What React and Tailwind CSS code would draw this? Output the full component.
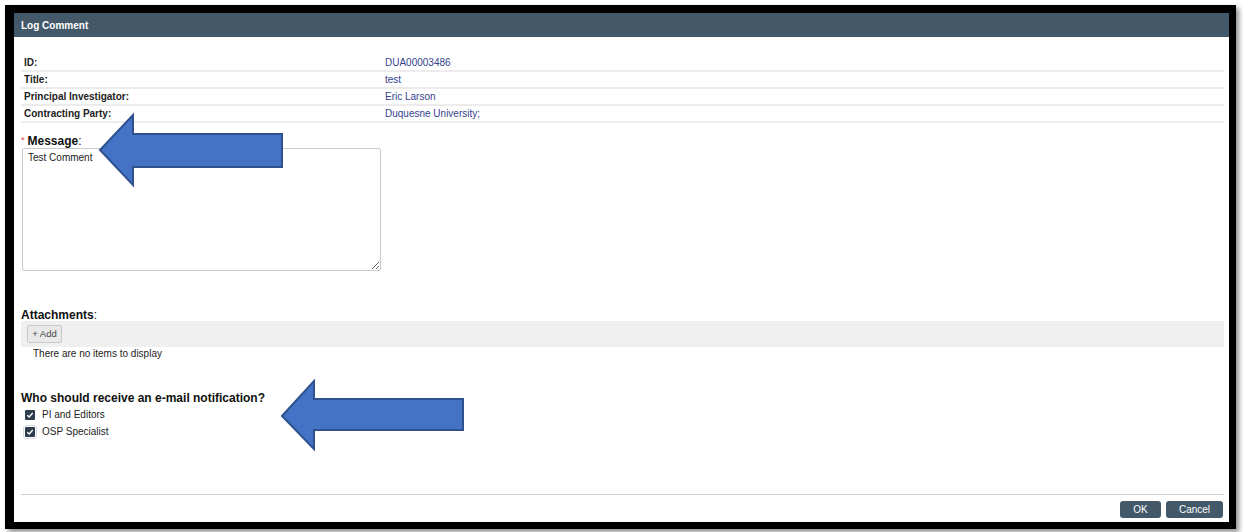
import React from "react";

const font = { fontFamily: '"Liberation Sans", Arial, sans-serif' };

function Row({ label, value }) {
  return (
    <div className="flex h-[17px] items-center border-b-2 border-[#ececec] pl-[3px]">
      <div className="w-[361px] text-[10px] font-bold leading-[15px] text-[#222]">{label}</div>
      <div className="text-[10px] leading-[15px] text-[#33428a]">{value}</div>
    </div>
  );
}

function Check({ label, focus }) {
  return (
    <div className="flex h-[17px] items-center">
      <span
        className={
          "ml-[4px] flex h-[10px] w-[10px] items-center justify-center rounded-[1px] bg-[#2f3e4e] " +
          (focus ? "outline outline-1 outline-offset-1 outline-[#d5dde6]" : "")
        }
      >
        <svg width="8" height="8" viewBox="0 0 8 8">
          <path d="M1.3 4.2 L3.2 6 L6.7 2" stroke="white" strokeWidth="1.4" fill="none" />
        </svg>
      </span>
      <span className="ml-[7px] text-[10px] leading-[12px] text-[#222]">{label}</span>
    </div>
  );
}

export default function App() {
  return (
    <div className="relative h-[532px] w-[1243px] overflow-hidden bg-white" style={font}>
      <div className="ml-[5px] mt-[5px] flex h-[524px] w-[1231px] flex-col border-b-[7px] border-l-[9px] border-r-[7px] border-t-[8px] border-black bg-white shadow-[3px_3px_5px_rgba(0,0,0,0.45)]">
        <div className="flex h-[24px] shrink-0 items-center bg-[#435868] px-[7px] text-[10px] font-bold text-white">
          Log Comment
        </div>
        <div className="flex flex-1 flex-col pl-[7px] pr-[5px]">
          <div className="mt-[18px]">
            <Row label="ID:" value="DUA00003486" />
            <Row label="Title:" value="test" />
            <Row label="Principal Investigator:" value="Eric Larson" />
            <Row label="Contracting Party:" value="Duquesne University;" />
          </div>
          <div className="mt-[11px] flex h-[14px] items-center leading-[14px] text-[#111]">
            <span className="mr-[3px] self-start pt-[1px] text-[9px] leading-[10px] text-[#e03a3a]">*</span>
            <span className="text-[12px] font-bold">Message</span>
            <span className="text-[12px]">:</span>
          </div>
          <textarea
            readOnly
            defaultValue="Test Comment"
            className="ml-[1px] h-[123px] w-[359px] rounded-[2px] border border-[#c9c9c9] px-[5px] py-[3px] text-[10px] leading-[12px] text-[#222] outline-none"
            style={font}
          />
          <div className="mt-[35px] h-[15px] leading-[15px] text-[#111]">
            <span className="text-[12px] font-bold">Attachments</span>
            <span className="text-[12px]">:</span>
          </div>
          <div className="flex h-[26px] items-center bg-[#f0f0f0] pl-[6px]">
            <div className="flex h-[18px] w-[35px] items-center justify-center rounded-[2px] border border-[#c8c8c8] bg-[#e9e9e9] text-[9.5px] text-[#444]">
              + Add
            </div>
          </div>
          <div className="mt-[1px] pl-[12px] text-[10px] leading-[12px] text-[#222]">There are no items to display</div>
          <div className="mt-[31px] h-[15px] text-[12px] font-bold leading-[15px] text-[#111]">
            Who should receive an e-mail notification?
          </div>
          <Check label="PI and Editors" />
          <Check label="OSP Specialist" focus />
        </div>
        <div className="ml-[7px] mr-[5px] flex h-[28px] shrink-0 justify-end border-t border-[#cfcfcf] pr-[1px] pt-[6px]">
          <div className="flex h-[17px] w-[41px] items-center justify-center rounded-[3px] bg-[#435868] text-[10px] text-white">
            OK
          </div>
          <div className="ml-[5px] flex h-[17px] w-[57px] items-center justify-center rounded-[3px] bg-[#435868] text-[10px] text-white">
            Cancel
          </div>
        </div>
      </div>
      <svg className="pointer-events-none absolute left-0 top-0" width="1243" height="532">
        <polygon
          points="100,150 133,115 133,134 282,134 282,167 133,167 133,185"
          fill="#4472c4"
          stroke="#2f528f"
          strokeWidth="2"
        />
        <polygon
          points="282,416 314,381 314,399 463,399 463,430 314,430 314,449"
          fill="#4472c4"
          stroke="#2f528f"
          strokeWidth="2"
        />
      </svg>
    </div>
  );
}
